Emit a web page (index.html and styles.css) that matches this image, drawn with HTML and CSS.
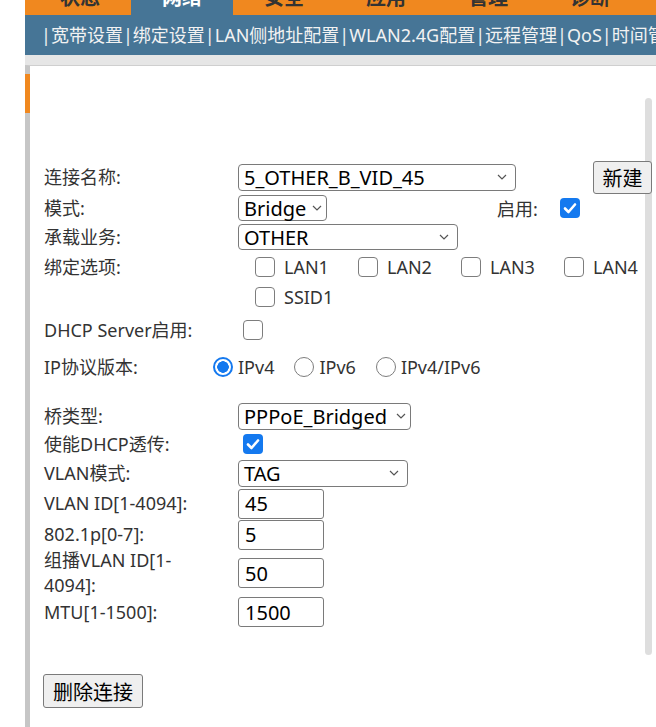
FILE: index.html
```html
<!DOCTYPE html>
<html lang="zh-CN">
<head>
<meta charset="utf-8">
<title>宽带设置</title>
<link rel="stylesheet" href="styles.css">
</head>
<body>
<div class="page">
  <nav class="tabs">
    <span class="tab">状态</span>
    <span class="tab active">网络</span>
    <span class="tab">安全</span>
    <span class="tab">应用</span>
    <span class="tab">管理</span>
    <span class="tab">诊断</span>
  </nav>
  <div class="subnav">|宽带设置|绑定设置|LAN侧地址配置|WLAN2.4G配置|远程管理|QoS|时间管理</div>
  <div class="strip"></div>
  <div class="panel">
    <div class="marker"></div>
    <div class="thumb"></div>
    <div class="form">
      <div class="row r1">
        <span class="lbl">连接名称:</span>
        <div class="sel w278 h27"><span>5_OTHER_B_VID_45</span><svg class="chev" width="10" height="6" viewBox="0 0 10 6"><path d="M1 1 L5 5 L9 1" fill="none" stroke="#555" stroke-width="1.2"/></svg></div>
        <button class="btn new">新建</button>
      </div>
      <div class="row r2">
        <span class="lbl">模式:</span>
        <div class="sel w89 h26 tight"><span>Bridge</span><svg class="chev" width="10" height="6" viewBox="0 0 10 6"><path d="M1 1 L5 5 L9 1" fill="none" stroke="#555" stroke-width="1.2"/></svg></div>
        <span class="lbl2">启用:</span>
        <span class="cb on"><svg width="20" height="20" viewBox="0 0 20 20"><path d="M5 10.5 L8.5 14 L15 6.5" fill="none" stroke="#fff" stroke-width="2.6" stroke-linecap="round" stroke-linejoin="round"/></svg></span>
      </div>
      <div class="row r3">
        <span class="lbl">承载业务:</span>
        <div class="sel w220 h26"><span>OTHER</span><svg class="chev" width="10" height="6" viewBox="0 0 10 6"><path d="M1 1 L5 5 L9 1" fill="none" stroke="#555" stroke-width="1.2"/></svg></div>
      </div>
      <div class="row r4">
        <span class="lbl lh30">绑定选项:</span>
        <div class="opts">
          <label class="opt"><span class="cb"></span>LAN1</label>
          <label class="opt"><span class="cb"></span>LAN2</label>
          <label class="opt"><span class="cb"></span>LAN3</label>
          <label class="opt"><span class="cb"></span>LAN4</label>
          <label class="opt"><span class="cb"></span>SSID1</label>
        </div>
      </div>
      <div class="row r5">
        <span class="lbl">DHCP Server启用:</span>
        <span class="cb ml5"></span>
      </div>
      <div class="row r6">
        <span class="lbl narrow">IP协议版本:</span>
        <label class="radio-opt"><span class="rd on"></span>IPv4</label>
        <label class="radio-opt"><span class="rd"></span>IPv6</label>
        <label class="radio-opt"><span class="rd"></span>IPv4/IPv6</label>
      </div>
      <div class="row r7">
        <span class="lbl">桥类型:</span>
        <div class="sel w173 h27 tight"><span>PPPoE_Bridged</span><svg class="chev" width="10" height="6" viewBox="0 0 10 6"><path d="M1 1 L5 5 L9 1" fill="none" stroke="#555" stroke-width="1.2"/></svg></div>
      </div>
      <div class="row r8">
        <span class="lbl">使能DHCP透传:</span>
        <span class="cb on ml5"><svg width="20" height="20" viewBox="0 0 20 20"><path d="M5 10.5 L8.5 14 L15 6.5" fill="none" stroke="#fff" stroke-width="2.6" stroke-linecap="round" stroke-linejoin="round"/></svg></span>
      </div>
      <div class="row r9">
        <span class="lbl">VLAN模式:</span>
        <div class="sel w170 h27"><span>TAG</span><svg class="chev" width="10" height="6" viewBox="0 0 10 6"><path d="M1 1 L5 5 L9 1" fill="none" stroke="#555" stroke-width="1.2"/></svg></div>
      </div>
      <div class="row r10">
        <span class="lbl">VLAN ID[1-4094]:</span>
        <span class="inp">45</span>
      </div>
      <div class="row r11">
        <span class="lbl">802.1p[0-7]:</span>
        <span class="inp">5</span>
      </div>
      <div class="row r12">
        <span class="lbl">组播VLAN ID[1-<wbr>4094]:</span>
        <span class="inp">50</span>
      </div>
      <div class="row r13">
        <span class="lbl">MTU[1-1500]:</span>
        <span class="inp">1500</span>
      </div>
      <div class="actions">
        <button class="btn del">删除连接</button>
      </div>
    </div>
  </div>
</div>
</body>
</html>
```
FILE: styles.css
```css
* { box-sizing: border-box; }

body {
  margin: 0;
  background: #fff;
  font-family: "Noto Sans", "Noto Sans CJK SC", sans-serif;
  overflow: hidden;
}

.page {
  margin-left: 25px;
}

.tabs {
  display: flex;
  height: 40px;
  margin-top: -24px;
  padding-left: 4px;
  background: #f0881f;
}

.tab {
  width: 102px;
  display: flex;
  align-items: center;
  justify-content: center;
  font-size: 20px;
  font-weight: bold;
  color: #333;
}

.tab.active {
  background: #467596;
  color: #fff;
}

.tabs + .subnav { margin-top: -1px; }

.subnav {
  height: 40px;
  background: #467596;
  color: #f2f2f2;
  font-size: 18px;
  line-height: 40px;
  padding-left: 16px;
  white-space: nowrap;
  overflow: hidden;
}

.strip {
  height: 10px;
  background: #e6e6e6;
}

.panel {
  position: relative;
  border-top: 1px solid #cfcfcf;
  border-left: 5px solid #c6c6c6;
  padding: 94px 4px 40px 14px;
}

.marker {
  position: absolute;
  left: -5px;
  top: 8px;
  width: 5px;
  height: 39px;
  background: #f0881f;
}

.thumb {
  position: absolute;
  right: 4px;
  top: 32px;
  width: 7px;
  height: 557px;
  background: #dedede;
  border-radius: 4px;
}

.form {
  position: relative;
}

.row {
  display: flex;
  align-items: center;
}

.r1 { height: 34px; }
.r2 { height: 28px; }
.r3 { height: 30px; }
.r4 { height: 60px; align-items: flex-start; }
.r5 { height: 36px; }
.r6 { height: 38px; }
.r7 { height: 28px; margin-top: 16px; }
.r8 { height: 28px; }
.r9 { height: 30px; }
.r10 { height: 31px; }
.r11 { height: 31px; }
.r12 { height: 46px; }
.r13 { height: 32px; }

.lbl {
  width: 194px;
  flex: none;
  padding-right: 28px;
  font-size: 18px;
  line-height: 25px;
  color: #333;
}

.lbl.lh30 { line-height: 30px; }
.lbl.narrow { width: 169px; }

.lbl2 {
  margin-left: 170px;
  width: 63px;
  font-size: 18px;
  color: #333;
}

.sel {
  display: flex;
  align-items: center;
  justify-content: space-between;
  border: 1px solid #7a7a7a;
  border-radius: 4px;
  background: #fff;
  padding: 0 8px 0 5px;
  font-size: 20px;
  color: #000;
  white-space: nowrap;
}

.sel.tight { padding-right: 4px; }

.chev { flex: none; margin-left: 3px; }

.w278 { width: 278px; }
.w89 { width: 89px; }
.w220 { width: 220px; }
.w173 { width: 173px; }
.w170 { width: 170px; }
.h27 { height: 27px; }
.h26 { height: 26px; }

.btn {
  font-family: inherit;
  font-size: 20px;
  color: #000;
  background: #efefef;
  border: 1px solid #7a7a7a;
  border-radius: 3px;
  padding: 0;
}

.btn.new {
  margin-left: auto;
  width: 59px;
  height: 33px;
}

.btn.del {
  width: 100px;
  height: 34px;
}

.cb {
  width: 20px;
  height: 20px;
  flex: none;
  display: inline-block;
  border: 1.5px solid #7d7d7d;
  border-radius: 4px;
  background: #fff;
}

.cb.on {
  border: none;
  background: #1479ef;
}

.cb svg { display: block; }

.ml5 { margin-left: 5px; }

.opts {
  display: grid;
  grid-template-columns: repeat(4, 103px);
  padding-left: 17px;
}

.opt {
  display: flex;
  align-items: center;
  gap: 9px;
  height: 30px;
  font-size: 18px;
  color: #333;
  white-space: nowrap;
}

.radio-opt {
  display: flex;
  align-items: center;
  gap: 5px;
  margin-right: 20px;
  font-size: 18px;
  color: #333;
}

.rd {
  width: 20px;
  height: 20px;
  flex: none;
  border: 1.5px solid #7d7d7d;
  border-radius: 50%;
  background: #fff;
}

.rd.on {
  border: 2px solid #1479ef;
  background: radial-gradient(circle, #1479ef 0 5.5px, #fff 6px);
}

.inp {
  width: 86px;
  height: 30px;
  display: flex;
  align-items: center;
  padding-left: 6px;
  border: 1px solid #7a7a7a;
  border-radius: 3px;
  font-size: 20px;
  color: #000;
}

.actions {
  margin-top: 46px;
  margin-left: -1px;
}
```
